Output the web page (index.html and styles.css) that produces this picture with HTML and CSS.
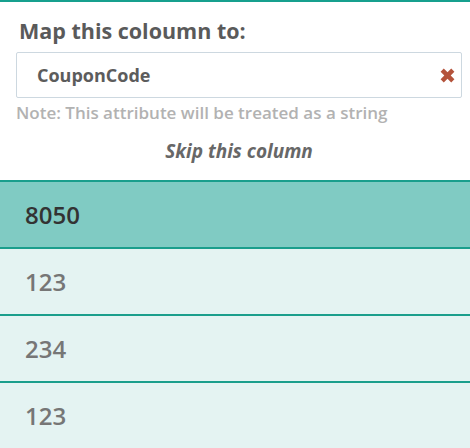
FILE: index.html
```html
<!DOCTYPE html>
<html>
<head>
<meta charset="utf-8">
<link rel="stylesheet" href="styles.css">
</head>
<body>
<div class="panel">
  <div class="mapper">
    <div class="title">Map this coloumn to:</div>
    <div class="field">
      <span class="value">CouponCode</span>
      <svg class="clear" width="17" height="17" viewBox="0 0 16 16"><path d="M1.5 4.5 L4.5 1.5 L8 5 L11.5 1.5 L14.5 4.5 L11 8 L14.5 11.5 L11.5 14.5 L8 11 L4.5 14.5 L1.5 11.5 L5 8 Z" fill="#b4533b"/></svg>
    </div>
    <div class="note">Note: This attribute will be treated as a string</div>
    <div class="skip">Skip this column</div>
  </div>
  <div class="row head">8050</div>
  <div class="row">123</div>
  <div class="row">234</div>
  <div class="row">123</div>
</div>
</body>
</html>
```

FILE: styles.css
```css
html, body {
  margin: 0;
  padding: 0;
  background: #ffffff;
}
body {
  font-family: "Open Sans", Lato, "Liberation Sans", sans-serif;
  width: 470px;
  height: 448px;
  overflow: hidden;
}
.panel {
  display: flex;
  flex-direction: column;
  width: 480px;
  border-top: 2px solid #17a08e;
}
.mapper {
  display: flex;
  flex-direction: column;
  padding: 15px 18px 0 16px;
  height: 178px;
  box-sizing: border-box;
}
.title {
  font-size: 21.5px;
  font-weight: bold;
  color: #5a5a5a;
  padding-left: 3px;
  line-height: 28px;
}
.field {
  margin-top: 7px;
  height: 46px;
  box-sizing: border-box;
  border: 1px solid #cdd8e0;
  border-radius: 2px;
  display: flex;
  align-items: center;
  justify-content: space-between;
  padding: 0 5px 0 20px;
}
.value {
  font-size: 18px;
  font-weight: bold;
  color: #5c5c5c;
}
.clear {
  display: block;
}
.note {
  margin-top: 4px;
  font-size: 17px;
  font-weight: 600;
  color: #b2b2b2;
  line-height: 22px;
}
.skip {
  margin-top: 15px;
  text-align: center;
  font-size: 19px;
  font-weight: bold;
  font-style: italic;
  color: #676767;
  line-height: 24px;
}
.row {
  height: 67px;
  box-sizing: border-box;
  border-top: 2px solid #1a9e8c;
  background: #e4f3f2;
  display: flex;
  align-items: center;
  padding-left: 25px;
  font-size: 24px;
  font-weight: 600;
  color: #767676;
}
.row.head {
  background: #80cbc3;
  color: #333333;
}
```
